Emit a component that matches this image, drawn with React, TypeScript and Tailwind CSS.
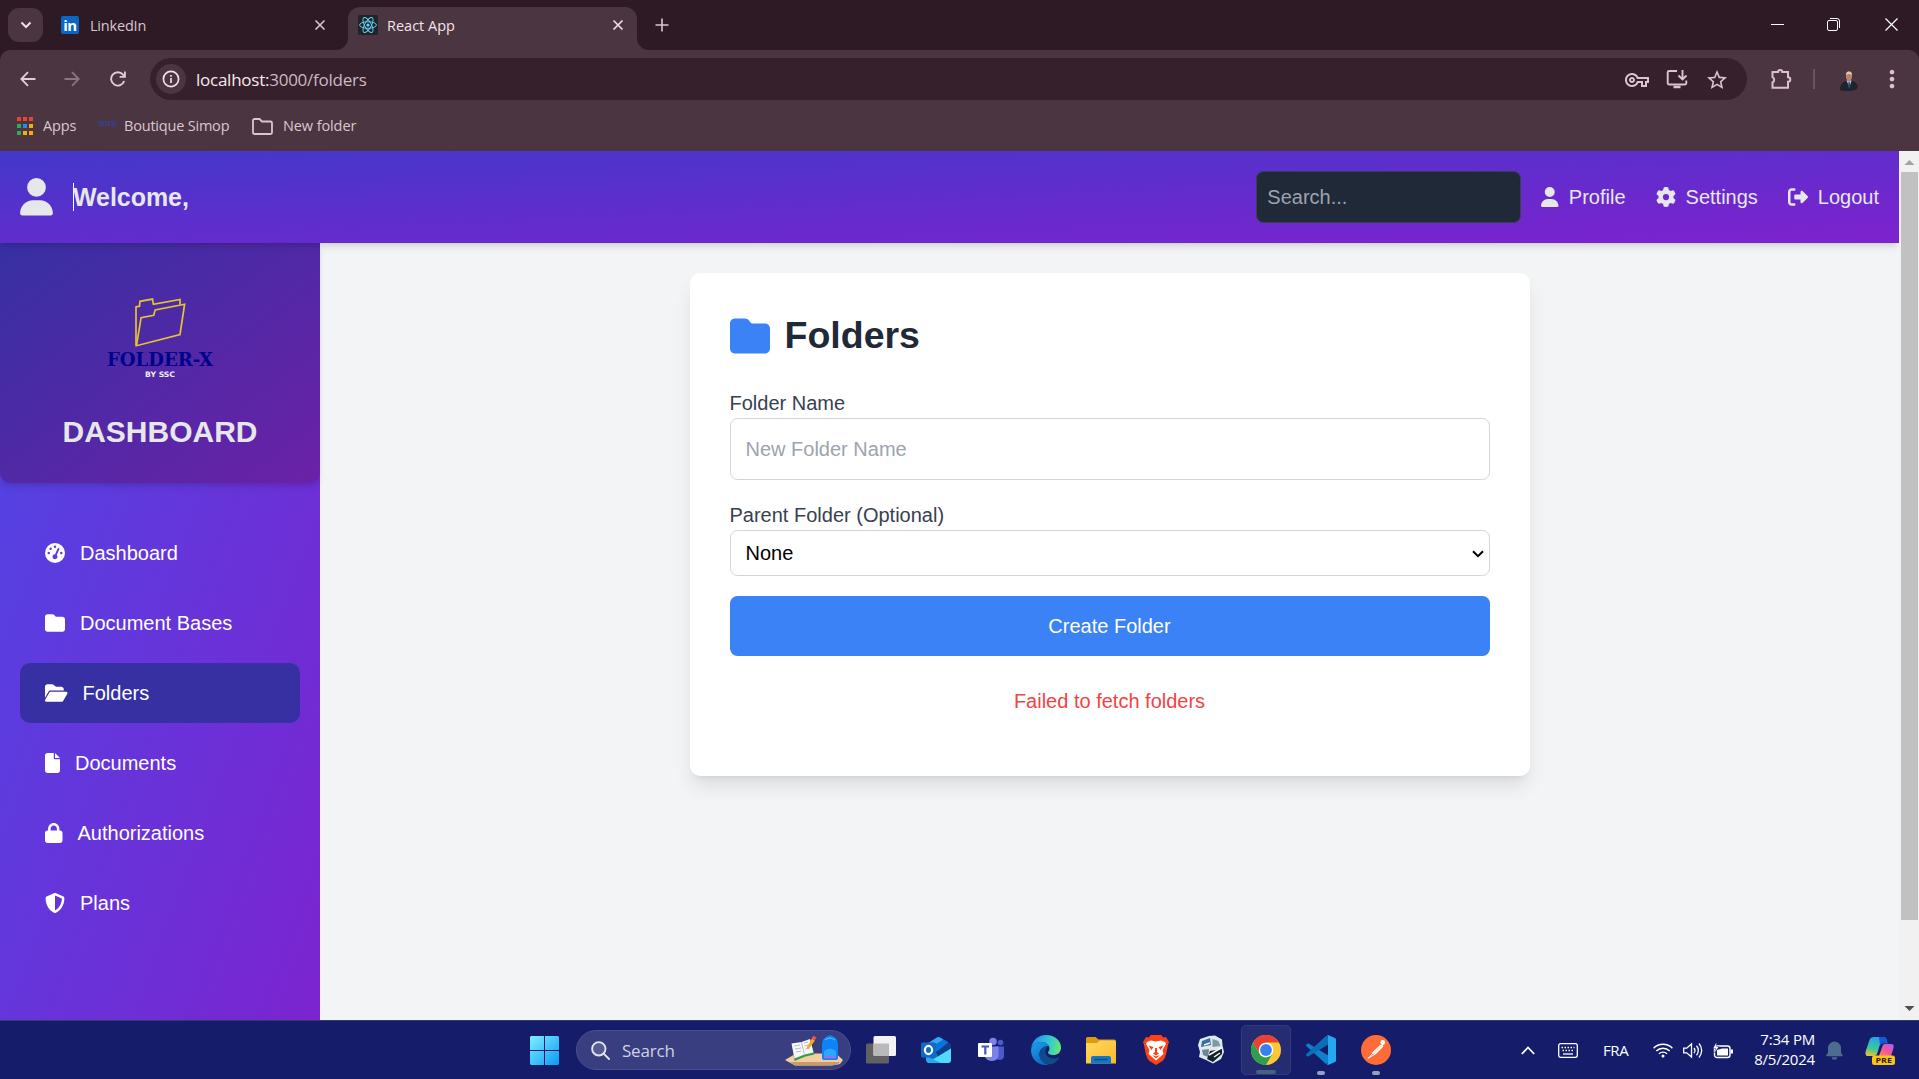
import React from "react";
import {
  FaFile,
  FaFolder,
  FaFolderOpen,
  FaGaugeHigh,
  FaGear,
  FaLock,
  FaRightFromBracket,
  FaShieldHalved,
  FaUser,
} from "react-icons/fa6";
import { MdMoreVert, MdOutlineVpnKey, MdStarOutline } from "react-icons/md";

function Cross({ className = "" }: { className?: string }) {
  return (
    <svg viewBox="0 0 12 12" className={`h-3 w-3 ${className}`} fill="none" stroke="currentColor" strokeWidth="1.6">
      <path d="M1.5 1.5l9 9M10.5 1.5l-9 9" />
    </svg>
  );
}

function ReactLogo() {
  return (
    <svg viewBox="0 0 20 20" className="h-5 w-5 shrink-0">
      <rect width="20" height="20" rx="1.5" fill="#20232a" />
      <g fill="none" stroke="#61dafb" strokeWidth="0.9">
        <ellipse cx="10" cy="10" rx="8.4" ry="3.3" />
        <ellipse cx="10" cy="10" rx="8.4" ry="3.3" transform="rotate(60 10 10)" />
        <ellipse cx="10" cy="10" rx="8.4" ry="3.3" transform="rotate(120 10 10)" />
      </g>
      <circle cx="10" cy="10" r="1.6" fill="#61dafb" />
    </svg>
  );
}

function TabStrip() {
  return (
    <div className="flex h-[50px] items-start bg-[#2e1a25] pl-2">
      <div className="mt-2 flex h-[34px] w-[35px] items-center justify-center rounded-[11px] bg-[#4b3541] text-[#f0dfe8]">
        <svg viewBox="0 0 12 8" className="h-2 w-3" fill="none" stroke="currentColor" strokeWidth="2">
          <path d="M1.5 1.5L6 6l4.5-4.5" />
        </svg>
      </div>
      <div className="ml-[18px] flex h-[50px] w-[287px] items-center">
        <div className="flex h-[18px] w-[18px] items-center justify-center rounded-[2px] bg-[#0a66c2] font-['Open_Sans'] text-[15px] leading-none font-bold tracking-[-0.5px] text-white">
          in
        </div>
        <span className="mt-px ml-[11px] w-[224px] text-[14.5px] tracking-[-0.2px] text-[#d9c3ce]">LinkedIn</span>
        <Cross className="text-[#dcc5d0]" />
      </div>
      <div className="relative mt-[7px] flex h-[43px] w-[289px] items-center rounded-t-[12px] bg-[#4b3541] pb-[7px] pl-[10px]">
        <svg viewBox="0 0 12 12" className="absolute bottom-0 -left-3 h-3 w-3">
          <path d="M12 0v12H0A12 12 0 0 0 12 0z" fill="#4b3541" />
        </svg>
        <svg viewBox="0 0 12 12" className="absolute -right-3 bottom-0 h-3 w-3">
          <path d="M0 0v12h12A12 12 0 0 1 0 0z" fill="#4b3541" />
        </svg>
        <ReactLogo />
        <span className="mt-px ml-[9px] w-[225px] text-[14.5px] text-[#f2e3ea]">React App</span>
        <Cross className="text-[#f2e3ea]" />
      </div>
      <svg viewBox="0 0 14 14" className="mt-[18px] ml-[18px] h-3.5 w-3.5 text-[#dcc5d0]" fill="none" stroke="currentColor" strokeWidth="1.6">
        <path d="M7 .5v13M.5 7h13" />
      </svg>
      <div className="mt-[18px] ml-auto mr-[21px] flex items-start text-white">
        <svg viewBox="0 0 13 13" className="h-[13px] w-[13px]" shapeRendering="crispEdges">
          <path d="M0 6.5h13" stroke="currentColor" />
        </svg>
        <svg viewBox="0 0 13 13" className="ml-[43px] h-[13px] w-[13px]" fill="none" stroke="currentColor">
          <rect x=".5" y="2.5" width="10" height="10" rx="1.5" />
          <path d="M3 .5h7a2.5 2.5 0 0 1 2.5 2.5v7" />
        </svg>
        <svg viewBox="0 0 13 13" className="ml-[45px] h-[13px] w-[13px]" fill="none" stroke="currentColor" strokeWidth="1.2">
          <path d="M.5.5l12 12M12.5.5l-12 12" />
        </svg>
      </div>
    </div>
  );
}

function Toolbar() {
  return (
    <div className="bg-[#2e1a25]">
      <div className="flex h-[58px] items-center rounded-t-[10px] bg-[#4b3541] text-[#dfc6d2]">
        <svg viewBox="0 0 16 16" className="ml-5 h-4 w-4" fill="none" stroke="#e3cbd7" strokeWidth="1.8">
          <path d="M15.5 8H1.5M8 1.2L1.3 8 8 14.8" />
        </svg>
        <svg viewBox="0 0 16 16" className="ml-7 h-4 w-4" fill="none" stroke="#8b7480" strokeWidth="1.8">
          <path d="M.5 8h14M8 1.2L14.7 8 8 14.8" />
        </svg>
        <svg viewBox="0 0 16 16" className="ml-[30px] h-4 w-4" fill="none" stroke="#e3cbd7" strokeWidth="1.9">
          <path d="M14.2 10A6.700 6.700 0 1 1 13 3.600L14.500 5.300" />
          <path d="M14.900 .5v5.400H9.600" />
        </svg>
        <div className="ml-[24px] flex h-[42px] w-[1597px] items-center rounded-full bg-[#35202b] pl-[6px]">
          <div className="flex h-[30px] w-[30px] items-center justify-center rounded-full bg-[#4b3541]">
            <svg viewBox="0 0 18 18" className="h-[18px] w-[18px]" fill="none" stroke="#f0dfe8" strokeWidth="1.7">
              <circle cx="9" cy="9" r="7.6" />
              <path d="M9 8v5M9 5v1.8" />
            </svg>
          </div>
          <span className="mt-px ml-[10px] text-[17px] tracking-[-0.25px] whitespace-nowrap text-[#cdb9c3]">
            <span className="text-[#f6ebf0]">localhost:</span>3000/folders
          </span>
          <div className="mr-[18px] ml-auto flex items-center text-[#d8c6cf]">
            <MdOutlineVpnKey className="mt-px h-6 w-6" />
            <svg viewBox="0 0 22 20" className="ml-[17px] h-5 w-[22px]" fill="none" stroke="currentColor" strokeWidth="1.9">
              <path d="M11 2H3.2a1.500 1.500 0 0 0-1.500 1.500V14a1.500 1.500 0 0 0 1.500 1.500h15.600a1.500 1.500 0 0 0 1.500-1.500v-2.500M16.500 1v9M12.500 6.500l4 4 4-4" />
              <path d="M7.500 18h7" strokeWidth="2.500" />
            </svg>
            <MdStarOutline className="mt-px ml-[17px] h-[24px] w-[24px]" />
          </div>
        </div>
        <svg viewBox="0 0 22 22" className="ml-6 h-[22px] w-[22px]" fill="none" stroke="#dfbfd0" strokeWidth="2">
          <path d="M1.500 4h5.600a2.100 2.100 0 0 1 4.200 0h5.700v5.200a2.200 2.200 0 0 1 0 4.600v6H1.500v-5.300a3 3 0 0 0 0-5.400z" />
        </svg>
        <div className="ml-5 h-5 w-[2px] bg-[#6d5360]" />
        <svg viewBox="0 0 18 20" className="mt-1 ml-[25px] h-5 w-[18px]">
          <path d="M0 19c0-5 2-8 6-9h6c4 1 6 3 5.500 7-1 2-4 3-9 3-4 0-7 0-8.500-1z" fill="#20222c" />
          <path d="M6.500 9.500h5L9.500 16z" fill="#c5d3e8" />
          <path d="M8.500 10.500h1.200l.6 5-1 2-1.200-2z" fill="#27468c" />
          <ellipse cx="9" cy="5" rx="3.100" ry="4.500" fill="#b98468" />
          <path d="M5.900 4a3.100 3.600 0 0 1 6.200 0c-2-1.500-4-1.500-6.200 0z" fill="#dcc7b8" />
        </svg>
        <MdMoreVert className="ml-[20px] h-7 w-7 text-[#dfbfd0]" />
      </div>
      <div className="flex h-[43px] items-start bg-[#4b3541] pt-[6px] pl-[17px] text-[14.5px] tracking-[-0.1px] text-[#d9c7d0]">
        <div className="flex h-6 items-center">
          <div className="grid grid-cols-3 gap-x-[2px] gap-y-[2.5px]">
            <i className="h-[4.500px] w-1 bg-[#ea4335]" />
            <i className="h-[4.500px] w-1 bg-[#ea4335]" />
            <i className="h-[4.500px] w-1 bg-[#ea4335]" />
            <i className="h-[4.500px] w-1 bg-[#34a853]" />
            <i className="h-[4.500px] w-1 bg-[#1a8cff]" />
            <i className="h-[4.500px] w-1 bg-[#fbab05]" />
            <i className="h-[4.500px] w-1 bg-[#34a853]" />
            <i className="h-[4.500px] w-1 bg-[#fbab05]" />
            <i className="h-[4.500px] w-1 bg-[#fbab05]" />
          </div>
          <span className="ml-[10px] w-[55px]">Apps</span>
          <span className="-mt-1 w-[26px] font-['Liberation_Sans'] text-[9px] font-bold tracking-[-1.7px] text-[#3b3f86]">simop</span>
          <span className="w-[128px] tracking-[-0.2px] whitespace-nowrap">Boutique Simop</span>
          <svg viewBox="0 0 21 17" className="h-[17px] w-[21px]" fill="none" stroke="currentColor" strokeWidth="1.800">
            <path d="M1 2.500A1.500 1.500 0 0 1 2.500 1h5l2.500 2.500h8.500A1.500 1.500 0 0 1 20 5v9.500a1.500 1.500 0 0 1-1.500 1.500h-16A1.500 1.500 0 0 1 1 14.500z" />
          </svg>
          <span className="ml-[10px]">New folder</span>
        </div>
      </div>
    </div>
  );
}

function Header() {
  return (
    <header className="relative z-10 flex h-[92px] shrink-0 items-center justify-between bg-[linear-gradient(to_bottom_right,#4338ca,#7e22ce)] px-5 text-[#e5e7eb] shadow-[0_5px_7.5px_-1.25px_rgba(0,0,0,0.1),0_2.5px_5px_-2.5px_rgba(0,0,0,0.1)]">
      <div className="flex items-center">
        <FaUser className="h-[37.5px] w-[33px]" />
        <div className="ml-5 flex items-center">
          <i className="-mr-px h-7 w-px bg-white" />
          <span className="text-[25px] leading-[35px] font-bold tracking-[-0.05px]">Welcome,</span>
        </div>
      </div>
      <div className="flex items-center">
        <div className="flex h-[52px] w-[265px] items-center rounded-[7.5px] border border-[#374151] bg-[#1f2937] px-[10px] text-[#9ca3af]">
          Search...
        </div>
        <a className="ml-5 flex items-center">
          <FaUser className="mr-[10px] h-5 w-[17.5px]" />
          Profile
        </a>
        <a className="ml-[30px] flex items-center">
          <FaGear className="mr-[10px] h-5 w-5" />
          Settings
        </a>
        <a className="ml-[30px] flex items-center">
          <FaRightFromBracket className="mr-[10px] h-5 w-5" />
          Logout
        </a>
      </div>
    </header>
  );
}

function Logo() {
  return (
    <svg viewBox="0 0 120 90" className="h-[90px] w-[120px]">
      <g fill="none" stroke="#e6c32f" strokeWidth="1.700">
        <path d="M36 56.700V18l3.500-.8.500-4.900 12.500-2.200.9 5.200L80 10.500v5" />
        <path d="M36.500 56.700l4.600-28 12.600-2.400 1.500-5.300L84.600 15.200 80 45.500z" />
      </g>
      <text x="7" y="76.800" textLength="106" lengthAdjust="spacingAndGlyphs" fill="#00008b" className="font-['DejaVu_Serif'] text-[18.500px] font-bold">
        FOLDER-X
      </text>
      <text x="45" y="87.500" textLength="30" lengthAdjust="spacingAndGlyphs" fill="#f1eef8" className="font-['DejaVu_Sans'] text-[7.500px] font-bold">
        BY SSC
      </text>
    </svg>
  );
}

const navItems = [
  { label: "Dashboard", icon: <FaGaugeHigh className="h-5 w-5" /> },
  { label: "Document Bases", icon: <FaFolder className="h-5 w-5" /> },
  { label: "Folders", icon: <FaFolderOpen className="h-5 w-[22.5px]" />, active: true },
  { label: "Documents", icon: <FaFile className="h-5 w-[15px]" /> },
  { label: "Authorizations", icon: <FaLock className="h-5 w-[17.5px]" /> },
  { label: "Plans", icon: <FaShieldHalved className="h-5 w-5" /> },
];

function Sidebar() {
  return (
    <aside className="h-[869px] w-80 shrink-0 bg-[linear-gradient(to_bottom_right,#4f46e5,#7e22ce)] text-white">
      <div className="flex h-60 flex-col items-center rounded-b-[10px] bg-[linear-gradient(to_bottom_right,#3730a3,#6b21a8)] pt-[46px] shadow-[0_5px_7.5px_-1.25px_rgba(0,0,0,0.1),0_2.5px_5px_-2.5px_rgba(0,0,0,0.1)]">
        <Logo />
        <h2 className="mt-[33px] text-[30px] leading-10 font-bold text-[#e5e7eb]">DASHBOARD</h2>
      </div>
      <nav className="mt-10 flex flex-col gap-[10px] px-5">
        {navItems.map((item) => (
          <a
            key={item.label}
            className={`flex h-[60px] items-center gap-[15px] rounded-[10px] px-[25px] ${item.active ? "bg-[#3730a3]" : ""}`}
          >
            {item.icon}
            {item.label}
          </a>
        ))}
      </nav>
    </aside>
  );
}

function FolderCard() {
  return (
    <section className="h-[503px] w-[840px] rounded-[10px] bg-white p-10 shadow-[0_12.5px_18.75px_-3.75px_rgba(0,0,0,0.1),0_5px_7.5px_-5px_rgba(0,0,0,0.1)]">
      <h1 className="flex items-center text-[37.5px] leading-[45px] font-bold text-[#1f2937]">
        <FaFolder className="mr-[15px] h-10 w-10 text-[#3b82f6]" />
        Folders
      </h1>
      <div className="mt-[30px] text-[#374151]">Folder Name</div>
      <div className="flex h-[62px] items-center rounded-[7.5px] border border-[#d1d5db] px-[15px] text-[#9ca3af]">
        New Folder Name
      </div>
      <div className="mt-5 text-[#374151]">Parent Folder (Optional)</div>
      <div className="flex h-[46px] items-center justify-between rounded-[7.5px] border border-[#d1d5db] pr-[5px] pl-[15px] text-black">
        None
        <svg viewBox="0 0 12 8" className="mt-px h-2 w-3" fill="none" stroke="currentColor" strokeWidth="2">
          <path d="M1 1.200l5 5 5-5" />
        </svg>
      </div>
      <button className="mt-5 h-[60px] w-full rounded-[7.5px] bg-[#3b82f6] text-white">Create Folder</button>
      <p className="mt-[30px] text-center text-[#ef4444]">Failed to fetch folders</p>
    </section>
  );
}

function Scrollbar() {
  return (
    <div className="flex w-5 shrink-0 flex-col items-center bg-[#f1f1f1]">
      <svg viewBox="0 0 20 21" className="h-[21px] w-5">
        <path d="M5.500 14l5-5 5 5z" fill="#a3a3a3" />
      </svg>
      <div className="h-[748px] w-[17px] bg-[#c1c1c1]" />
      <svg viewBox="0 0 20 21" className="mt-auto h-[21px] w-5">
        <path d="M5.500 7l5 5 5-5z" fill="#505050" />
      </svg>
    </div>
  );
}

function StartIcon() {
  return (
    <svg viewBox="0 0 29 29" className="h-[29px] w-[29px] shrink-0">
      <defs>
        <linearGradient id="start" x1="0" y1="0" x2="29" y2="29" gradientUnits="userSpaceOnUse">
          <stop stopColor="#80f0ff" />
          <stop offset="1" stopColor="#0a98f8" />
        </linearGradient>
      </defs>
      <path d="M1 0h13v14H0V1zM15 0h13l1 1v13H15zM0 15h14v14H1l-1-1zM15 15h14v13l-1 1H15z" fill="url(#start)" />
    </svg>
  );
}

function BackpackArt() {
  return (
    <svg viewBox="0 0 58 32" className="h-8 w-[58px]">
      <path d="M0 26l11-6.500h40l7 6.500-3 4-8 1.500H10z" fill="#f2cfa0" />
      <path d="M4 28h51l-2 2.500-8 1H11z" fill="#c99c6c" />
      <path d="M7 11l10-1.500 8-3 4.500 14-9 2-11 4.500z" fill="#3a9a4a" />
      <path d="M6.500 9.500l10-1.500 8.500-3 3.500 13.500-9 2-10 4z" fill="#f7f7fa" />
      <path d="M16.500 8l3 13" stroke="#bdbdcc" />
      <path d="M9 12l6-1M10 15l6-1M11 18l5-1M19 9l4-1M19.500 12l4-1M20.500 15l4-1" stroke="#a9a9be" strokeWidth=".8" />
      <path d="M22 13l5-8.500 3 2-6 8-2 .5z" fill="#f7a928" />
      <path d="M26.500 4.500l2-3 3 2-2 3z" fill="#ed5145" />
      <path d="M41 3q4-5 8 0v2h-8z" fill="#1566c9" />
      <path d="M37 11q0-9 8-9t8 9v13q0 2-3 2H40q-3 0-3-2z" fill="#0f82f5" />
      <path d="M39 17q6-5 12 0v6H39z" fill="#2ea6ff" />
      <path d="M40 6q5-4 10 0" stroke="#66c6ff" fill="none" />
      <path d="M39 23.500h12" stroke="#c05de8" strokeWidth="1.800" />
    </svg>
  );
}

function TaskView() {
  return (
    <svg viewBox="0 0 30 30" className="h-[30px] w-[30px]">
      <rect y="8.500" width="23" height="20" rx="1.500" fill="#616161" />
      <rect x="7.500" y="1" width="22.500" height="20" rx="1.500" fill="#f2f2f4" />
      <path d="M7.500 8.500H23V21H9a1.500 1.500 0 0 1-1.500-1.500z" fill="#b9b9ba" />
    </svg>
  );
}

function Outlook() {
  return (
    <svg viewBox="0 0 30 30" className="h-[30px] w-[30px]">
      <path d="M5 9.500L16 2.500q1.500-.8 3 0l11 7V25q0 3-3 3H9q-4 0-4-4z" fill="#1275c9" />
      <path d="M5 9.500L16 2.500q1.500-.8 3 0l3.500 2L9 13z" fill="#3aa5ee" />
      <path d="M10 12l13-7.500 4.500 3L15 16z" fill="#0a74da" />
      <path d="M15 17L27.500 7.500 30 9.500v4L17 22z" fill="#0c3e8c" />
      <path d="M6 28l24-14.500V25q0 3-3 3z" fill="#4fdaf5" />
      <path d="M5 21l15 7H9q-4 0-4-4z" fill="#27a9ee" />
      <rect y="7.500" width="15" height="15" rx="1.500" fill="#0f6cc6" />
      <ellipse cx="7.500" cy="15" rx="3.600" ry="4.100" fill="none" stroke="#fff" strokeWidth="2.200" />
    </svg>
  );
}

function Teams() {
  return (
    <svg viewBox="0 0 30 30" className="h-[30px] w-[30px]">
      <circle cx="24.500" cy="7.500" r="2.800" fill="#5059c9" />
      <path d="M19 11.500h9v9q0 4-4 4.500-4 0-5-3z" fill="#5059c9" />
      <circle cx="17" cy="6.500" r="3.800" fill="#7b83eb" />
      <path d="M9 11.500h13.500v8q0 6-6.500 6.500-5 0-7-4z" fill="#7b83eb" />
      <rect x="2" y="8" width="14" height="14" rx="1" fill="#fff" />
      <path d="M5.500 11.500h7.500M9.300 11.500v8" stroke="#4b53bc" strokeWidth="2.200" />
    </svg>
  );
}

function Edge() {
  return (
    <svg viewBox="0 0 30 30" className="h-[30px] w-[30px]">
      <defs>
        <linearGradient id="edgeTop" x1="2" y1="8" x2="30" y2="14" gradientUnits="userSpaceOnUse">
          <stop stopColor="#2492e0" />
          <stop offset=".5" stopColor="#2fc3dc" />
          <stop offset="1" stopColor="#66eb6e" />
        </linearGradient>
        <linearGradient id="edgeLow" x1="0" y1="10" x2="14" y2="30" gradientUnits="userSpaceOnUse">
          <stop stopColor="#1b9de4" />
          <stop offset="1" stopColor="#0c62c0" />
        </linearGradient>
      </defs>
      <path d="M0 14C1 5.500 7 0 15 0c9 0 15 6 15 12.500 0 5-3.500 7.500-7.500 7.500-4 0-5.500-1.500-5.500-2.500s1.500-1.300 1.500-4C18.500 10 15 7 10.500 7 5 7 1.500 10 0 14z" fill="url(#edgeTop)" />
      <path d="M0 15C1 10 5 7 10 7c4 0 7 1.700 8.200 4.500C15 10.500 8.500 13 8.500 19c0 5 3.500 9.500 9 10.700C7 31.500 0 24 0 15z" fill="url(#edgeLow)" />
      <path d="M16.500 11.300C11.500 12 8.500 15 8.500 19.500c0 6 5 10.500 11 9.800 4-.7 7-3 8.500-6 .3-.7-.2-1-.8-.7-5 2.400-12.700.4-12.700-6 0-2.200.8-3.600 2-5.300z" fill="#114a8b" />
    </svg>
  );
}

function Explorer() {
  return (
    <svg viewBox="0 0 30 30" className="h-[30px] w-[30px]">
      <defs>
        <linearGradient id="folderBody" x1="0" y1="0" x2="1" y2="1">
          <stop stopColor="#ffd964" />
          <stop offset="1" stopColor="#fbb92a" />
        </linearGradient>
      </defs>
      <path d="M0 3.500Q0 2 1.500 2h8l3 2.500H28q2 0 2 2V12H0z" fill="#dd9c0c" />
      <path d="M0 8h11l2.500-2.500H28.500Q30 5.500 30 7v21.500H0z" fill="url(#folderBody)" />
      <path d="M5 28.500V23q0-2 2-2h16q2 0 2 2v5.500z" fill="#1478c9" />
      <path d="M9 24.500h12" stroke="#0a4b88" strokeWidth="1.300" strokeLinecap="round" />
    </svg>
  );
}

function Brave() {
  return (
    <svg viewBox="0 0 26 30" className="h-[30px] w-[26px]">
      <path d="M8 0h10l2.500 2.500L23 2l3 5-1 3c-1.500 9-3 14-5.500 16L13 30l-6.500-4C4 24 2.500 19 1 10L0 7l3-5 2.500.5z" fill="#fb4214" />
      <path d="M4 7l4-1.500 5 1 5-1L22 7l1 2-3.500 6 1 4-3.500 3-4 3.500L9 22l-3.500-3 1-4L3 9z" fill="#fff" />
      <path d="M5.500 10.500l5 1.500-2 3zM20.500 10.500l-5 1.500 2 3zM12 13h2v4l2 1.500-3 2-3-2 2-1.500zM9 20l4 1.500 4-1.500-4 3.500z" fill="#fb4214" />
    </svg>
  );
}

function Crest() {
  return (
    <svg viewBox="0 0 26 30" className="h-[30px] w-[26px]">
      <path d="M2 4l9-3 6-.5 7 4 .500 6L26 17l-3 7-8 4.500-7-3.500-7-3 1-5L0 10z" fill="#dfe9ee" />
      <path d="M4 6l8-3 1 7-10 2z" fill="#386f9d" />
      <path d="M14.500 4l6 2 2 5-8 1z" fill="#7f99a8" />
      <path d="M4 15l7-1-1 8-5-2z" fill="#6c8695" />
      <path d="M12 16l12-2v5l-9 8-6-3z" fill="#15202b" />
      <path d="M11 20l12-7M6 10l6-2M16 22l6-4" stroke="#f5fafc" strokeWidth="1.500" />
    </svg>
  );
}

function ChromeLogo() {
  return (
    <svg viewBox="0 0 30 30" className="h-[30px] w-[30px]">
      <circle cx="15" cy="15" r="15" fill="#fcc934" />
      <path d="M2 7.500A15 15 0 0 1 28 7.500H15L8.500 18.700z" fill="#e94235" />
      <path d="M2 7.500L8.500 18.750A7.500 7.500 0 0 0 15 22.500L21.500 18.750 15 30A15 15 0 0 1 2 7.500z" fill="#2f9e4f" />
      <circle cx="15" cy="15" r="7.300" fill="#fff" />
      <circle cx="15" cy="15" r="5.900" fill="#397fee" />
    </svg>
  );
}

function VsCode() {
  return (
    <svg viewBox="0 0 30 30" className="h-[30px] w-[30px]">
      <path d="M2 8.200L.3 9.800q-.5.600 0 1.200L20 29l3-1V21z" fill="#0f80cc" />
      <path d="M2 21.800L.3 20.200q-.5-.6 0-1.200L20 1l3 1v7z" fill="#0a6fb5" />
      <path d="M22 0l7 3q1 .5 1 1.500v21q0 1-1 1.500l-7 3q-1 0-1.500-.5 1.500.5 1.500-1.500V2q0-2-1.500-1.500Q21 0 22 0z" fill="#27a7f0" />
    </svg>
  );
}

function Postman() {
  return (
    <svg viewBox="0 0 30 30" className="h-[30px] w-[30px]">
      <circle cx="15" cy="15" r="15" fill="#ff6c37" />
      <circle cx="21.800" cy="7.500" r="2.400" fill="#fff" />
      <path d="M20 9.500l2.500 2-8 8-3-2z" fill="#fde6dc" />
      <path d="M13 17l-6 6.500 7-4.500M20 10l-8.500 7.500 2 2L22 11z" fill="none" stroke="#fff" strokeWidth="1" />
    </svg>
  );
}

const pinned = [
  { name: "task-view", icon: <TaskView /> },
  { name: "outlook", icon: <Outlook /> },
  { name: "teams", icon: <Teams /> },
  { name: "edge", icon: <Edge /> },
  { name: "explorer", icon: <Explorer /> },
  { name: "brave", icon: <Brave /> },
  { name: "crest", icon: <Crest /> },
  { name: "chrome", icon: <ChromeLogo />, box: "border border-[#343a7c] bg-[#262c72]", mark: "w-5 bg-[#44647c]" },
  { name: "vscode", icon: <VsCode />, mark: "w-2 bg-[#9a9dc4]" },
  { name: "postman", icon: <Postman />, mark: "w-2 bg-[#9a9dc4]" },
];

function Tray() {
  return (
    <div className="mr-6 ml-auto flex items-center text-white">
      <svg viewBox="0 0 14 9" className="h-[9px] w-[14px]" fill="none" stroke="currentColor" strokeWidth="1.800">
        <path d="M.8 8L7 1.500 13.200 8" />
      </svg>
      <svg viewBox="0 0 20 15" className="ml-[23px] h-[15px] w-5" fill="none" stroke="currentColor" strokeWidth="1.300">
        <rect x=".7" y=".7" width="18.600" height="13.600" rx="2" />
        <path d="M3.500 4.500h13M4.500 7.500h12" strokeDasharray="1.500 1.500" strokeWidth="1.600" />
        <path d="M5 11h10" />
      </svg>
      <span className="ml-[25px] w-[50px] text-[15px] tracking-[-0.4px]">FRA</span>
      <svg viewBox="0 0 20 16" className="h-4 w-5" fill="none" stroke="currentColor" strokeWidth="1.400">
        <path d="M.6 6.200a13.300 13.300 0 0 1 18.800 0M3.300 9a9.500 9.500 0 0 1 13.400 0M6 11.800a5.600 5.600 0 0 1 8 0" />
        <circle cx="10" cy="13.900" r="1.500" fill="currentColor" stroke="none" />
      </svg>
      <svg viewBox="0 0 20 17" className="ml-[10px] h-[17px] w-5" fill="none" stroke="currentColor" strokeWidth="1.300">
        <path d="M.7 6.200v4.600h3L8.500 15V2L3.700 6.200zM11 6a4 4 0 0 1 0 5M13.500 3.800a7 7 0 0 1 0 9.400M16 1.500a10.500 10.500 0 0 1 0 14" />
      </svg>
      <svg viewBox="0 0 20 17" className="ml-[10px] h-[17px] w-5">
        <rect x="1.500" y="4" width="15.500" height="11.500" rx="2.500" fill="none" stroke="currentColor" strokeWidth="1.400" />
        <path d="M4 13.500V8l5-1.500h6v7zM17.500 7.500H20v4h-2.500z" fill="currentColor" />
        <path d="M3.500 0L0 6.500h2.500L1.500 11 6 4.500H3.500z" fill="currentColor" stroke="#151d6b" strokeWidth=".4" />
      </svg>
      <div className="-mt-[3px] w-[82px] text-right text-[15px] leading-5 tracking-[-0.2px] whitespace-nowrap">
        <div>7:34 PM</div>
        <div>8/5/2024</div>
      </div>
      <svg viewBox="0 0 17 20" className="ml-[11px] h-5 w-[17px]">
        <path d="M2 8a6.500 6.500 0 0 1 13 0v4.500l1.800 3q.2.800-.8.800H1q-1 0-.8-.8L2 12.500zM5.500 17.300h6q-.6 2.500-3 2.500t-3-2.500z" fill="#4c6c90" />
      </svg>
      <Copilot />
    </div>
  );
}

function Copilot() {
  return (
    <svg viewBox="0 0 30 30" className="mt-[2px] ml-[22px] h-[30px] w-[30px]">
      <defs>
        <linearGradient id="cpLeft" x1="8" y1="1" x2="4" y2="20" gradientUnits="userSpaceOnUse">
          <stop stopColor="#22a4ee" />
          <stop offset=".6" stopColor="#3fc793" />
          <stop offset="1" stopColor="#f5c330" />
        </linearGradient>
        <linearGradient id="cpRight" x1="26" y1="7" x2="16" y2="22" gradientUnits="userSpaceOnUse">
          <stop stopColor="#b45cf0" />
          <stop offset=".5" stopColor="#f0559e" />
          <stop offset="1" stopColor="#fb8d55" />
        </linearGradient>
      </defs>
      <path d="M9 1h10q2.500 0 3.500 6h-5q-2 0-3 3l-2.500 8q-.8 2-3 2H3.500Q-.5 20 .8 15L4.500 4Q5.500 1 9 1z" fill="url(#cpLeft)" />
      <path d="M14 1h5q2.500 0 3.500 6.500H18q-2 0-3 2z" fill="#1a56d6" />
      <path d="M20 8h6q3.500 0 2.500 4L26 20H14l3.500-10q.7-2 2.500-2z" fill="url(#cpRight)" />
      <rect x="7" y="19.500" width="23" height="9.500" rx="2.500" fill="#ffc40c" />
      <text x="10.500" y="27" textLength="16.500" lengthAdjust="spacingAndGlyphs" fill="#2a2412" className="font-['Open_Sans'] text-[7.500px] font-bold">
        PRE
      </text>
    </svg>
  );
}

function Taskbar() {
  return (
    <footer className="flex h-[59px] shrink-0 items-center border-t border-[#303b68] bg-[#151d6b] pl-[530px]">
      <StartIcon />
      <div className="ml-[17px] flex h-10 w-[275px] shrink-0 items-center rounded-full border border-[#4a508c] bg-[#383e7f] pl-[14px]">
        <svg viewBox="0 0 19 19" className="h-[19px] w-[19px]" fill="none" stroke="#e2e3ee" strokeWidth="1.900">
          <circle cx="7.800" cy="7.800" r="6.700" fill="#565b92" />
          <path d="M12.700 12.700l5.300 5.300" strokeLinecap="round" />
        </svg>
        <span className="mt-px ml-[12px] w-[163px] text-[17px] tracking-[-0.2px] text-[#d0d2e4]">Search</span>
        <BackpackArt />
      </div>
      <div className="ml-[2px] flex h-full items-center">
        {pinned.map((app) => (
          <div key={app.name} className="flex h-full w-[55px] items-center justify-center">
            <div className={`relative flex h-[50px] w-[50px] items-center justify-center rounded-[5px] ${app.box ?? ""}`}>
              {app.icon}
              {app.mark && <i className={`absolute bottom-0 h-1 rounded-full ${app.mark}`} />}
            </div>
          </div>
        ))}
      </div>
      <Tray />
    </footer>
  );
}

export default function App() {
  return (
    <div className="flex h-[1079px] w-[1919px] flex-col overflow-hidden font-['Open_Sans','Noto_Sans',sans-serif]">
      <TabStrip />
      <Toolbar />
      <div className="flex h-[869px] shrink-0 font-['Liberation_Sans',Arial,sans-serif] text-[20px] leading-[30px]">
        <div className="flex min-w-0 flex-1 flex-col overflow-hidden">
          <Header />
          <div className="flex h-[777px] overflow-hidden bg-[#f3f4f6]">
            <Sidebar />
            <main className="flex flex-1 justify-center pt-[30px]">
              <FolderCard />
            </main>
          </div>
        </div>
        <Scrollbar />
      </div>
      <Taskbar />
    </div>
  );
}
